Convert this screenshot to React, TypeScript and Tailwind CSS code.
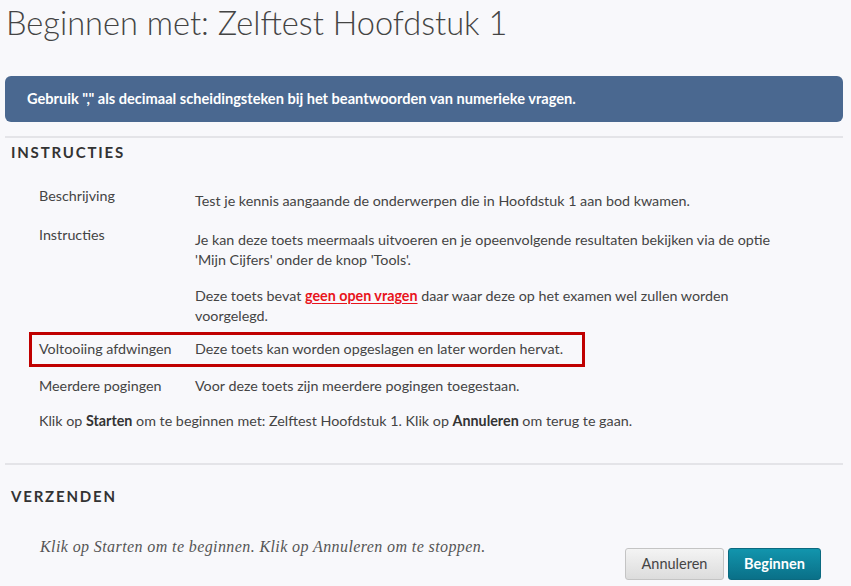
import React from "react";

const ROWS = [
  { label: "Beschrijving", value: <p>Test je kennis aangaande de onderwerpen die in Hoofdstuk 1 aan bod kwamen.</p> },
  {
    label: "Instructies",
    value: (
      <div className="flex flex-col gap-[16px]">
        <p>
          Je kan deze toets meermaals uitvoeren en je opeenvolgende resultaten bekijken via de optie
          <br />
          'Mijn Cijfers' onder de knop 'Tools'.
        </p>
        <p>
          Deze toets bevat{" "}
          <span className="font-bold text-[#e8141b] underline underline-offset-2">geen open vragen</span> daar waar
          deze op het examen wel zullen worden
          <br />
          voorgelegd.
        </p>
      </div>
    ),
  },
];

export default function App() {
  return (
    <div className="w-[851px] h-[586px] overflow-hidden bg-[#f8f8fb] text-[#444] font-['Lato','Noto_Sans',sans-serif]">
      <h1 className="pl-[6px] pt-[1px] text-[32.6px] font-light leading-[44px] text-[#444]">
        Beginnen met: Zelftest Hoofdstuk 1
      </h1>

      <div className="mx-[5px] mt-[31px] mr-[8px] h-[46px] rounded-[6px] bg-[#4a6890] pl-[22px] flex items-center text-[14.6px] font-bold text-white">
        Gebruik "," als decimaal scheidingsteken bij het beantwoorden van numerieke vragen.
      </div>

      <div className="mx-[5px] mr-[8px] mt-[14px] border-t-2 border-[#e4e4e8]">
        <h2 className="pl-[6px] pt-[3px] text-[15px] font-bold tracking-[0.12em] text-[#333]">INSTRUCTIES</h2>

        <div className="mt-[27px] flex flex-col text-[14.3px] leading-[20px]">
          {ROWS.map((r, i) => (
            <div key={r.label} className={`flex pl-[34px] ${i > 0 ? "mt-[19px]" : ""}`}>
              <div className="w-[156px] -mt-[5px]">{r.label}</div>
              <div className="flex-1">{r.value}</div>
            </div>
          ))}

          <div className="ml-[24px] mt-[6px] w-[556px] h-[35px] border-[3px] border-[#c00000] flex items-center pl-[7px]">
            <div className="w-[156px]">Voltooiing afdwingen</div>
            <div>Deze toets kan worden opgeslagen en later worden hervat.</div>
          </div>

          <div className="flex pl-[34px] mt-[9px]">
            <div className="w-[156px]">Meerdere pogingen</div>
            <div>Voor deze toets zijn meerdere pogingen toegestaan.</div>
          </div>

          <p className="pl-[34px] mt-[15px]">
            Klik op <b className="text-[#333]">Starten</b> om te beginnen met: Zelftest Hoofdstuk 1. Klik op{" "}
            <b className="text-[#333]">Annuleren</b> om terug te gaan.
          </p>
        </div>
      </div>

      <div className="mx-[5px] mr-[8px] mt-[32px] border-t-2 border-[#e4e4e8]">
        <h2 className="pl-[6px] pt-[20px] text-[15px] font-bold tracking-[0.12em] text-[#333]">VERZENDEN</h2>
        <div className="flex items-start">
          <p className="pl-[35px] pt-[28px] flex-1 italic text-[16px] tracking-[0.4px] text-[#555] font-['Liberation_Serif',serif]">
            Klik op Starten om te beginnen. Klik op Annuleren om te stoppen.
          </p>
          <div className="flex gap-[4px] pt-[41px] pr-[22px]">
            <button className="w-[99px] h-[32px] rounded-[3px] border border-[#c4c4c4] bg-gradient-to-b from-[#f4f4f4] to-[#dcdcdc] text-[14.5px] text-[#444]">
              Annuleren
            </button>
            <button className="w-[93px] h-[32px] rounded-[3px] border border-[#0b6a80] bg-gradient-to-b from-[#1295ad] to-[#0a7088] text-[14.5px] font-bold text-white">
              Beginnen
            </button>
          </div>
        </div>
      </div>
    </div>
  );
}
